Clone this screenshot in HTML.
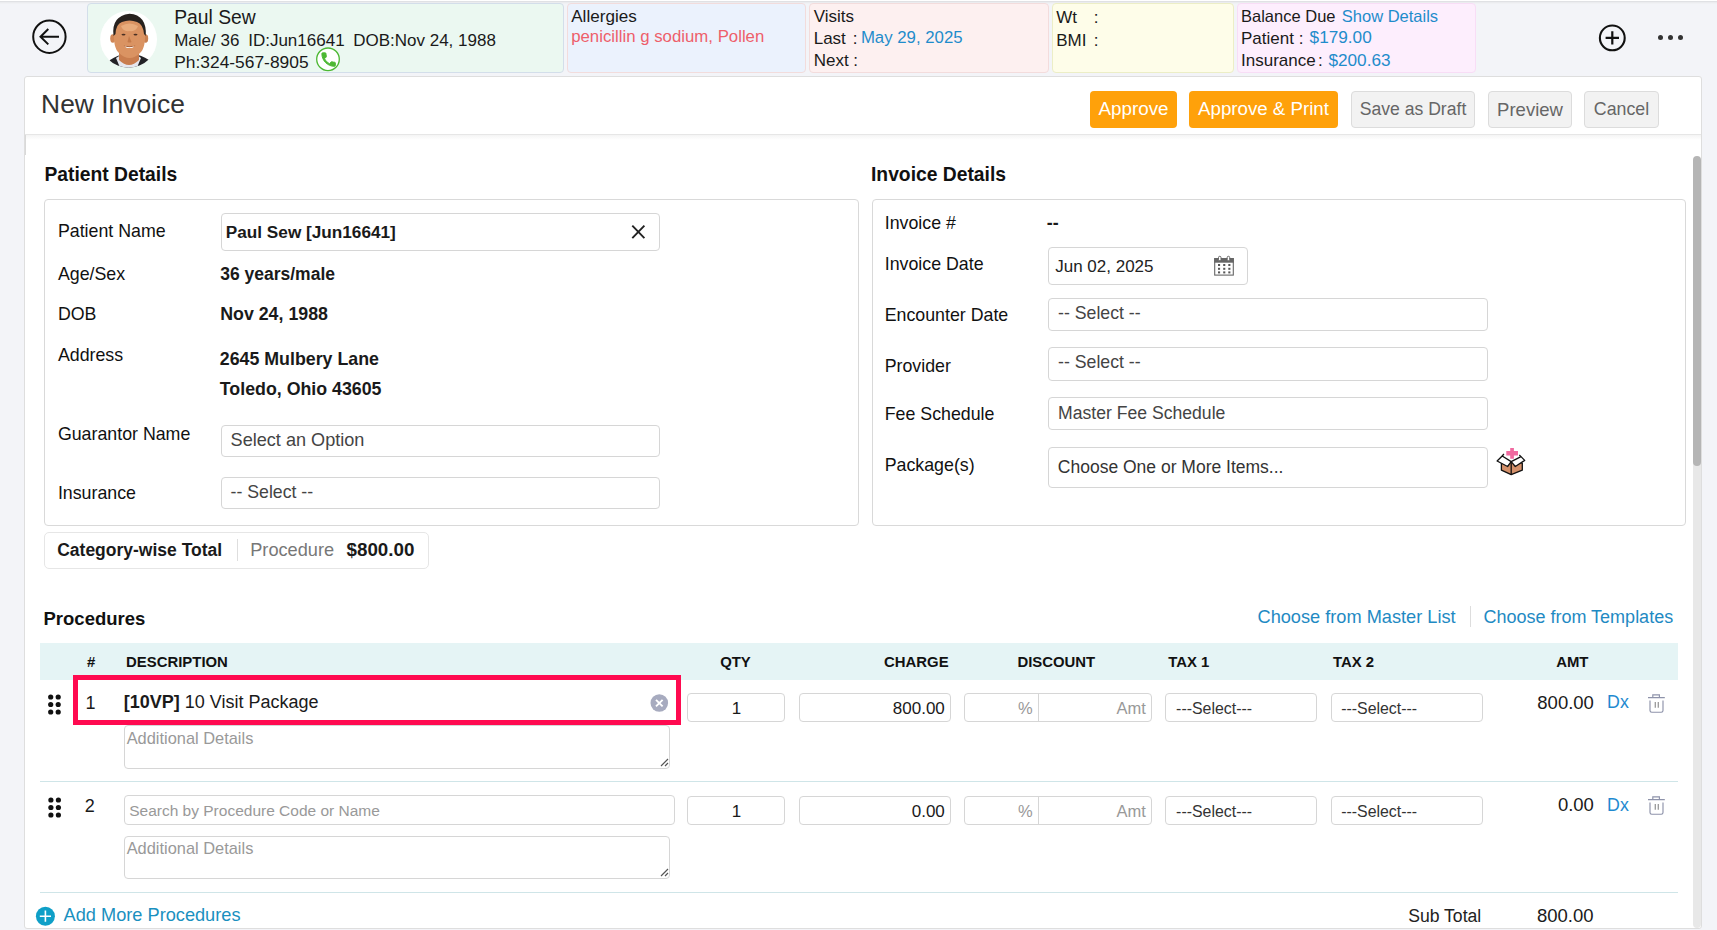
<!DOCTYPE html>
<html><head><meta charset="utf-8"><title>New Invoice</title>
<style>
html,body{margin:0;padding:0;width:1717px;height:930px;overflow:hidden;background:#f3f4f8;font-family:"Liberation Sans",sans-serif}
.t{position:absolute;line-height:1;white-space:nowrap}
.b{position:absolute}
</style></head><body>
<div class="b" style="left:0.0px;top:0.0px;width:1717.0px;height:1.0px;background:#fff"></div>
<div class="b" style="left:0.0px;top:1.0px;width:1717.0px;height:1.0px;background:#e0e1e4"></div>
<div class="b" style="left:0.0px;top:2.0px;width:1717.0px;height:1.0px;background:#ebecef"></div>
<div class="b" style="left:0.0px;top:3.0px;width:1717.0px;height:1.0px;background:#f0f1f4"></div>
<svg class="b" style="left:30px;top:18px" width="40" height="38" viewBox="30 18 40 38"><circle cx="49.4" cy="36.7" r="16.2" fill="none" stroke="#111" stroke-width="2"/><path d="M40.5 36.7H59M48.3 29L40.5 36.7L48.3 44.4" fill="none" stroke="#111" stroke-width="2"/></svg>
<div class="b" style="left:87.0px;top:3.0px;width:477.0px;height:70.0px;background:#ebf8f1;border:1px solid #d3deea;border-radius:4px;box-sizing:border-box"></div>
<div class="b" style="left:567.0px;top:3.0px;width:239.0px;height:70.0px;background:#ebf2fd;border:1px solid #f2dcdc;border-radius:4px;box-sizing:border-box"></div>
<div class="b" style="left:809.0px;top:3.0px;width:240.0px;height:70.0px;background:#fdf0f0;border:1px solid #f3dcdc;border-radius:4px;box-sizing:border-box"></div>
<div class="b" style="left:1052.0px;top:3.0px;width:182.0px;height:70.0px;background:#fefde9;border:1px solid #eceec6;border-radius:4px;box-sizing:border-box"></div>
<div class="b" style="left:1237.0px;top:3.0px;width:239.0px;height:70.0px;background:#fdeefd;border:1px solid #f8ddf6;border-radius:4px;box-sizing:border-box"></div>
<svg class="b" style="left:96px;top:6px" width="66" height="66" viewBox="96 6 66 66">
<circle cx="128.6" cy="39.3" r="28.4" fill="#fff"/>
<clipPath id="av"><circle cx="128.6" cy="39.3" r="28.4"/></clipPath>
<g clip-path="url(#av)">
<path d="M104 70 L110 60 Q118 55 124 54 L134 54 Q141 55 149 60 L154 70Z" fill="#222226"/>
<path d="M116 58 Q120 55 124 54 L134 54 Q138 55 141 58 L136 70 L121 70Z" fill="#e6e7ee"/>
<path d="M119 46 L119 60 Q129 70 139 60 L139 46Z" fill="#c97d4e"/>
<ellipse cx="112.8" cy="38.5" rx="2.6" ry="4.2" fill="#d08656"/>
<ellipse cx="145.6" cy="38.5" rx="2.6" ry="4.2" fill="#c98050"/>
<path d="M114 30 Q113 48 119 53 Q124 58 129.5 58 Q135 58 140 53 Q146 48 145 30 Q144 20 129.5 20 Q115 20 114 30Z" fill="#da9362"/>
<path d="M121 26 Q129.5 21 138 26 Q136 32 129.5 31 Q123 32 121 26Z" fill="#e9ac7c"/>
<path d="M113.5 36 Q111 16 129.5 13.8 Q147 15 145.8 36 L144 34 Q143 24 137 22 Q129.5 19 122 22 Q116 24 115.5 34Z" fill="#27211e"/>
<ellipse cx="123.5" cy="34.6" rx="2" ry="0.9" fill="#4a3024"/><ellipse cx="135.5" cy="34.6" rx="2" ry="0.9" fill="#4a3024"/>
<path d="M123.5 45.5 Q129.5 49.5 135.5 45.5 Q129.5 47.5 123.5 45.5Z" fill="#8a4a2a"/>
<path d="M125 46.2 Q129.5 48.4 134 46.2 L133 47.6 Q129.5 48.6 126 47.6Z" fill="#fff"/>
<path d="M129 36 L127.5 42 Q129.5 43 131.5 42Z" fill="#c47a4a"/>
</g></svg>
<div class="t" style="left:174.2px;top:7.8px;font-size:19.3px;font-weight:400;color:#1a1a1a;">Paul Sew</div>
<div class="t" style="left:174.2px;top:31.6px;font-size:17px;font-weight:400;color:#1a1a1a;">Male/ 36</div>
<div class="t" style="left:248.2px;top:31.6px;font-size:17px;font-weight:400;color:#1a1a1a;">ID:Jun16641</div>
<div class="t" style="left:353.2px;top:31.6px;font-size:17px;font-weight:400;color:#1a1a1a;">DOB:Nov 24, 1988</div>
<div class="t" style="left:174.2px;top:54.3px;font-size:17.4px;font-weight:400;color:#1a1a1a;">Ph:324-567-8905</div>
<svg class="b" style="left:312px;top:44px" width="32" height="30" viewBox="312 44 32 30"><circle cx="328" cy="59.3" r="11.3" fill="#fff" stroke="#4cb833" stroke-width="1.3"/><g transform="translate(319.6 50.6) scale(0.75)"><path d="M6.62 10.79c1.44 2.83 3.76 5.14 6.59 6.59l2.2-2.2c.27-.27.67-.36 1.02-.24 1.12.37 2.33.57 3.57.57.55 0 1 .45 1 1V20c0 .55-.45 1-1 1-9.39 0-17-7.610-17-17 0-.55.45-1 1-1h3.5c.55 0 1 .45 1 1 0 1.25.2 2.45.57 3.57.11.35.03.74-.25 1.02l-2.2 2.2z" fill="#4cb833" stroke="#4cb833" stroke-width="1.3" stroke-linejoin="round"/></g></svg>
<div class="t" style="left:571.2px;top:8.1px;font-size:17.1px;font-weight:400;color:#1a1a1a;">Allergies</div>
<div class="t" style="left:571.2px;top:28.6px;font-size:16.8px;font-weight:400;color:#ee5f6b;">penicillin g sodium, Pollen</div>
<div class="t" style="left:813.7px;top:8.1px;font-size:17px;font-weight:400;color:#1a1a1a;">Visits</div>
<div class="t" style="left:813.7px;top:30.1px;font-size:17px;font-weight:400;color:#1a1a1a;">Last</div>
<div class="t" style="left:852.7px;top:30.1px;font-size:17px;font-weight:400;color:#1a1a1a;">:</div>
<div class="t" style="left:860.9px;top:30.3px;font-size:16.8px;font-weight:400;color:#1f8ccb;">May 29, 2025</div>
<div class="t" style="left:813.7px;top:52.0px;font-size:17px;font-weight:400;color:#1a1a1a;">Next :</div>
<div class="t" style="left:1056.2px;top:9.0px;font-size:17px;font-weight:400;color:#1a1a1a;">Wt</div>
<div class="t" style="left:1093.7px;top:9.0px;font-size:17px;font-weight:400;color:#1a1a1a;">:</div>
<div class="t" style="left:1056.2px;top:31.8px;font-size:17px;font-weight:400;color:#1a1a1a;">BMI</div>
<div class="t" style="left:1093.7px;top:31.8px;font-size:17px;font-weight:400;color:#1a1a1a;">:</div>
<div class="t" style="left:1241.0px;top:8.1px;font-size:16.5px;font-weight:400;color:#1a1a1a;">Balance Due</div>
<div class="t" style="left:1341.8px;top:8.1px;font-size:16.5px;font-weight:400;color:#1f8ccb;">Show Details</div>
<div class="t" style="left:1241.0px;top:29.6px;font-size:17px;font-weight:400;color:#1a1a1a;">Patient</div>
<div class="t" style="left:1298.7px;top:29.6px;font-size:17px;font-weight:400;color:#1a1a1a;">:</div>
<div class="t" style="left:1309.6px;top:29.4px;font-size:17.2px;font-weight:400;color:#1f8ccb;">$179.00</div>
<div class="t" style="left:1241.0px;top:52.0px;font-size:17px;font-weight:400;color:#1a1a1a;">Insurance</div>
<div class="t" style="left:1318.0px;top:52.0px;font-size:17px;font-weight:400;color:#1a1a1a;">:</div>
<div class="t" style="left:1328.4px;top:51.8px;font-size:17.2px;font-weight:400;color:#1f8ccb;">$200.63</div>
<svg class="b" style="left:1596px;top:22px" width="32" height="32" viewBox="1596 22 32 32"><circle cx="1612.3" cy="37.9" r="12.4" fill="none" stroke="#111" stroke-width="2.1"/><path d="M1605.6 37.9H1619M1612.3 31.2V44.6" stroke="#111" stroke-width="2.2"/></svg>
<div class="b" style="left:1657.6px;top:35.3px;width:5.2px;height:5.2px;background:#333;border-radius:50%"></div>
<div class="b" style="left:1667.6px;top:35.3px;width:5.2px;height:5.2px;background:#333;border-radius:50%"></div>
<div class="b" style="left:1677.7px;top:35.3px;width:5.2px;height:5.2px;background:#333;border-radius:50%"></div>
<div class="b" style="left:24.0px;top:76.0px;width:1678.0px;height:853.0px;background:#fff;border:1px solid #dedede;border-radius:3px;box-sizing:border-box"></div>
<div class="b" style="left:25.0px;top:134.0px;width:1676.0px;height:1.0px;background:#e6e6e6"></div>
<div class="b" style="left:25.0px;top:135.0px;width:1676.0px;height:5.0px;background:linear-gradient(#f4f4f4,#fff)"></div>
<div class="b" style="left:25.0px;top:135.0px;width:1.0px;height:20.0px;background:#d9d9d9"></div>
<div class="t" style="left:41.1px;top:91.3px;font-size:26.4px;font-weight:400;color:#333;">New Invoice</div>
<div class="b" style="left:1090.0px;top:91.0px;width:87.0px;height:37.0px;background:#ffa10a;border-radius:4px"></div>
<div class="t" style="left:933.5px;width:400px;text-align:center;top:100.3px;font-size:18.8px;font-weight:400;color:#fff;">Approve</div>
<div class="b" style="left:1189.0px;top:91.0px;width:149.0px;height:37.0px;background:#ffa10a;border-radius:4px"></div>
<div class="t" style="left:1063.5px;width:400px;text-align:center;top:100.4px;font-size:18.7px;font-weight:400;color:#fff;">Approve &amp; Print</div>
<div class="b" style="left:1351.0px;top:91.0px;width:124.0px;height:37.0px;background:#f2f2f2;border:1px solid #dcdcdc;border-radius:4px;box-sizing:border-box"></div>
<div class="t" style="left:1213.0px;width:400px;text-align:center;top:101.3px;font-size:17.6px;font-weight:400;color:#666;">Save as Draft</div>
<div class="b" style="left:1488.0px;top:91.0px;width:84.0px;height:37.0px;background:#f2f2f2;border:1px solid #dcdcdc;border-radius:4px;box-sizing:border-box"></div>
<div class="t" style="left:1330.0px;width:400px;text-align:center;top:100.5px;font-size:18.5px;font-weight:400;color:#666;">Preview</div>
<div class="b" style="left:1584.0px;top:91.0px;width:75.0px;height:37.0px;background:#f2f2f2;border:1px solid #dcdcdc;border-radius:4px;box-sizing:border-box"></div>
<div class="t" style="left:1421.5px;width:400px;text-align:center;top:101.1px;font-size:17.8px;font-weight:400;color:#666;">Cancel</div>
<div class="b" style="left:1693.0px;top:300.0px;width:8.0px;height:628.0px;background:#e8e8e8;border-radius:0 0 4px 4px"></div>
<div class="b" style="left:1693.0px;top:156.0px;width:8.0px;height:310.0px;background:#b5b5b5;border-radius:4px"></div>
<div class="t" style="left:44.4px;top:165.1px;font-size:19.3px;font-weight:700;color:#111;">Patient Details</div>
<div class="b" style="left:44.0px;top:199.0px;width:815.0px;height:327.0px;border:1px solid #d9d9d9;border-radius:4px;box-sizing:border-box"></div>
<div class="t" style="left:57.9px;top:222.5px;font-size:17.8px;font-weight:400;color:#111;">Patient Name</div>
<div class="b" style="left:220.5px;top:212.5px;width:439.5px;height:38.5px;border:1px solid #d6d6d6;border-radius:4px;box-sizing:border-box;background:#fff;"></div>
<div class="t" style="left:225.8px;top:223.7px;font-size:17.2px;font-weight:700;color:#1a1a1a;">Paul Sew [Jun16641]</div>
<svg class="b" style="left:624px;top:216px" width="30" height="30" viewBox="624 216 30 30"><path d="M632.3 225.6L644.4 238.1M644.4 225.6L632.3 238.1" stroke="#222" stroke-width="1.9"/></svg>
<div class="t" style="left:57.9px;top:266.0px;font-size:17.8px;font-weight:400;color:#111;">Age/Sex</div>
<div class="t" style="left:220.2px;top:266.2px;font-size:17.5px;font-weight:700;color:#1a1a1a;">36 years/male</div>
<div class="t" style="left:57.9px;top:306.2px;font-size:17.8px;font-weight:400;color:#111;">DOB</div>
<div class="t" style="left:220.2px;top:305.7px;font-size:17.8px;font-weight:700;color:#1a1a1a;">Nov 24, 1988</div>
<div class="t" style="left:57.9px;top:347.2px;font-size:17.8px;font-weight:400;color:#111;">Address</div>
<div class="t" style="left:219.8px;top:351.3px;font-size:17.8px;font-weight:700;color:#1a1a1a;">2645 Mulbery Lane</div>
<div class="t" style="left:219.8px;top:380.8px;font-size:17.8px;font-weight:700;color:#1a1a1a;">Toledo, Ohio 43605</div>
<div class="t" style="left:57.9px;top:426.3px;font-size:17.8px;font-weight:400;color:#111;">Guarantor Name</div>
<div class="b" style="left:220.6px;top:424.6px;width:439.4px;height:32.4px;border:1px solid #d6d6d6;border-radius:4px;box-sizing:border-box;background:#fff;"></div>
<div class="t" style="left:230.6px;top:430.9px;font-size:18.1px;font-weight:400;color:#444;">Select an Option</div>
<div class="t" style="left:57.9px;top:485.4px;font-size:17.8px;font-weight:400;color:#111;">Insurance</div>
<div class="b" style="left:220.6px;top:476.5px;width:439.4px;height:32.5px;border:1px solid #d6d6d6;border-radius:4px;box-sizing:border-box;background:#fff;"></div>
<div class="t" style="left:230.6px;top:483.6px;font-size:17.7px;font-weight:400;color:#444;">-- Select --</div>
<div class="b" style="left:44.0px;top:532.0px;width:385.0px;height:37.0px;border:1px solid #e6e6e6;border-radius:5px;box-sizing:border-box"></div>
<div class="t" style="left:57.2px;top:541.6px;font-size:17.5px;font-weight:700;color:#1a1a1a;">Category-wise Total</div>
<div class="b" style="left:237.0px;top:539.0px;width:1.0px;height:22.0px;background:#dedede"></div>
<div class="t" style="left:250.2px;top:541.0px;font-size:18.2px;font-weight:400;color:#777;">Procedure</div>
<div class="t" style="left:346.5px;top:540.5px;font-size:18.8px;font-weight:700;color:#1a1a1a;">$800.00</div>
<div class="t" style="left:871.0px;top:165.1px;font-size:19.3px;font-weight:700;color:#111;">Invoice Details</div>
<div class="b" style="left:872.0px;top:199.0px;width:814.0px;height:327.0px;border:1px solid #d9d9d9;border-radius:4px;box-sizing:border-box"></div>
<div class="t" style="left:884.7px;top:214.5px;font-size:17.8px;font-weight:400;color:#111;">Invoice #</div>
<div class="t" style="left:1046.8px;top:214.5px;font-size:17.8px;font-weight:700;color:#1a1a1a;">--</div>
<div class="t" style="left:884.7px;top:256.1px;font-size:17.8px;font-weight:400;color:#111;">Invoice Date</div>
<div class="b" style="left:1048.0px;top:247.0px;width:200.0px;height:38.0px;border:1px solid #d6d6d6;border-radius:4px;box-sizing:border-box;background:#fff;"></div>
<div class="t" style="left:1055.2px;top:257.7px;font-size:17px;font-weight:400;color:#222;">Jun 02, 2025</div>
<svg class="b" style="left:1208px;top:250px" width="32" height="32" viewBox="1208 250 32 32">
<rect x="1214.7" y="258.6" width="18.6" height="16.5" fill="#fff" stroke="#666" stroke-width="1.1"/>
<rect x="1214.2" y="258.1" width="19.6" height="4.6" fill="#666"/>
<rect x="1218.5" y="256.3" width="2.5" height="4.4" rx="1.2" fill="#fff" stroke="#666" stroke-width="1"/>
<rect x="1227.2" y="256.3" width="2.5" height="4.4" rx="1.2" fill="#fff" stroke="#666" stroke-width="1"/>
<g fill="#555">
<rect x="1218" y="264" width="2.1" height="2"/><rect x="1223.2" y="264" width="2.1" height="2"/><rect x="1228.3" y="264" width="2.1" height="2"/>
<rect x="1218" y="267.8" width="2.1" height="2"/><rect x="1223.2" y="267.8" width="2.1" height="2"/><rect x="1228.3" y="267.8" width="2.1" height="2"/>
<rect x="1218" y="271.4" width="2.1" height="2"/><rect x="1223.2" y="271.4" width="2.1" height="2"/><rect x="1228.3" y="271.4" width="2.1" height="2"/>
</g></svg>
<div class="t" style="left:884.7px;top:307.2px;font-size:17.8px;font-weight:400;color:#111;">Encounter Date</div>
<div class="b" style="left:1048.0px;top:298.0px;width:440.0px;height:33.0px;border:1px solid #d6d6d6;border-radius:4px;box-sizing:border-box;background:#fff;"></div>
<div class="t" style="left:1058.1px;top:305.2px;font-size:17.7px;font-weight:400;color:#444;">-- Select --</div>
<div class="t" style="left:884.7px;top:357.5px;font-size:17.8px;font-weight:400;color:#111;">Provider</div>
<div class="b" style="left:1048.0px;top:347.0px;width:440.0px;height:34.0px;border:1px solid #d6d6d6;border-radius:4px;box-sizing:border-box;background:#fff;"></div>
<div class="t" style="left:1058.1px;top:354.4px;font-size:17.7px;font-weight:400;color:#444;">-- Select --</div>
<div class="t" style="left:884.7px;top:406.1px;font-size:17.8px;font-weight:400;color:#111;">Fee Schedule</div>
<div class="b" style="left:1048.0px;top:397.0px;width:440.0px;height:33.0px;border:1px solid #d6d6d6;border-radius:4px;box-sizing:border-box;background:#fff;"></div>
<div class="t" style="left:1058.1px;top:404.7px;font-size:17.6px;font-weight:400;color:#444;">Master Fee Schedule</div>
<div class="t" style="left:884.7px;top:456.8px;font-size:17.8px;font-weight:400;color:#111;">Package(s)</div>
<div class="b" style="left:1048.0px;top:446.5px;width:440.0px;height:41.5px;border:1px solid #d6d6d6;border-radius:4px;box-sizing:border-box;background:#fff;"></div>
<div class="t" style="left:1057.8px;top:459.0px;font-size:17.5px;font-weight:400;color:#333;">Choose One or More Items...</div>
<svg class="b" style="left:1490px;top:442px" width="42" height="38" viewBox="1490 442 42 38">
<path d="M1501.4 463.2 L1511.2 461.6 L1522.3 463.2 L1522.3 470.2 L1511.2 474.7 L1501.4 470.2Z" fill="#d4906a" stroke="#111" stroke-width="1.3" stroke-linejoin="round"/>
<path d="M1511.2 461.6 V474.7" stroke="#111" stroke-width="1.3"/>
<path d="M1497.1 461 L1502.2 456 L1511.2 461.6 L1507.6 466.5Z" fill="#fff" stroke="#111" stroke-width="1.3" stroke-linejoin="round"/>
<path d="M1511.2 461.6 L1521 456.6 L1524.7 460.4 L1515.3 466.5Z" fill="#fff" stroke="#111" stroke-width="1.3" stroke-linejoin="round"/>
<path d="M1502.2 456 L1503.9 454 M1521 456.6 L1519.3 455" stroke="#111" stroke-width="1.3"/>
<path d="M1510.2 447.9h3.7v3.1h4.1v4.5h-4.1v3.2h-3.7v-3.2h-3.9v-4.5h3.9z" fill="#f06aa0"/>
</svg>
<div class="t" style="left:43.5px;top:609.7px;font-size:18.5px;font-weight:700;color:#111;">Procedures</div>
<div class="t" style="left:1257.5px;top:607.7px;font-size:18.2px;font-weight:400;color:#1f8ac3;">Choose from Master List</div>
<div class="b" style="left:1470.0px;top:606.0px;width:1.0px;height:21.0px;background:#dddddd"></div>
<div class="t" style="left:1483.4px;top:607.9px;font-size:18px;font-weight:400;color:#1f8ac3;">Choose from Templates</div>
<div class="b" style="left:40.0px;top:643.0px;width:1638.0px;height:37.0px;background:#e5f4f5"></div>
<div class="t" style="left:86.9px;top:654.7px;font-size:14.9px;font-weight:700;color:#111;">#</div>
<div class="t" style="left:126.1px;top:654.7px;font-size:14.9px;font-weight:700;color:#111;">DESCRIPTION</div>
<div class="t" style="left:720.2px;top:654.7px;font-size:14.9px;font-weight:700;color:#111;">QTY</div>
<div class="t" style="left:884.1px;top:654.7px;font-size:14.9px;font-weight:700;color:#111;">CHARGE</div>
<div class="t" style="left:1017.4px;top:654.7px;font-size:14.9px;font-weight:700;color:#111;">DISCOUNT</div>
<div class="t" style="left:1168.3px;top:654.7px;font-size:14.9px;font-weight:700;color:#111;">TAX 1</div>
<div class="t" style="left:1332.9px;top:654.7px;font-size:14.9px;font-weight:700;color:#111;">TAX 2</div>
<div class="t" style="left:1556.2px;top:654.7px;font-size:14.9px;font-weight:700;color:#111;">AMT</div>
<svg class="b" style="left:40px;top:689px" width="30" height="30" viewBox="40 689 30 30" fill="#111"><circle cx="50.70" cy="697.00" r="2.6"/><circle cx="58.20" cy="697.00" r="2.6"/><circle cx="50.70" cy="704.50" r="2.6"/><circle cx="58.20" cy="704.50" r="2.6"/><circle cx="50.70" cy="712.00" r="2.6"/><circle cx="58.20" cy="712.00" r="2.6"/></svg>
<div class="t" style="left:85.4px;top:693.6px;font-size:18px;font-weight:400;color:#1a1a1a;">1</div>
<div class="b" style="left:73.0px;top:675.4px;width:608.0px;height:49.6px;border:5px solid #ff0a50;box-sizing:border-box"></div>
<div class="t" style="left:123.7px;top:693.0px;font-size:18px;color:#1a1a1a"><b>[10VP]</b> 10 Visit Package</div>
<svg class="b" style="left:644px;top:688px" width="30" height="30" viewBox="644 688 30 30"><circle cx="659.3" cy="703" r="8.8" fill="#a7abbf"/><path d="M656 699.8L662.6 706.4M662.6 699.8L656 706.4" stroke="#fff" stroke-width="1.9"/></svg>
<div class="b" style="left:123.7px;top:725.0px;width:546.8px;height:44.0px;border:1px solid #d6d6d6;border-radius:4px;box-sizing:border-box;background:#fff;"></div>
<svg class="b" style="left:659.5px;top:758px" width="9" height="9" viewBox="0 0 9 9"><path d="M8 1L1 8M8 5L5 8" stroke="#555" stroke-width="1.2"/></svg>
<div class="t" style="left:126.7px;top:730.1px;font-size:16.4px;font-weight:400;color:#999;">Additional Details</div>
<div class="b" style="left:687.4px;top:692.5px;width:98.1px;height:29.5px;border:1px solid #d6d6d6;border-radius:4px;box-sizing:border-box;background:#fff;"></div>
<div class="t" style="left:536.5px;width:400px;text-align:center;top:699.9px;font-size:17px;font-weight:400;color:#1a1a1a;">1</div>
<div class="b" style="left:798.5px;top:692.5px;width:152.1px;height:29.5px;border:1px solid #d6d6d6;border-radius:4px;box-sizing:border-box;background:#fff;"></div>
<div class="t" style="right:772.2px;top:699.9px;font-size:17px;font-weight:400;color:#1a1a1a;">800.00</div>
<div class="b" style="left:964.4px;top:692.5px;width:188.1px;height:29.5px;border:1px solid #d6d6d6;border-radius:4px;box-sizing:border-box;background:#fff;"></div>
<div class="b" style="left:1038.0px;top:693.0px;width:1.0px;height:28.0px;background:#d6d6d6"></div>
<div class="t" style="right:684.4px;top:700.3px;font-size:16.5px;font-weight:400;color:#999;">%</div>
<div class="t" style="right:571.1px;top:700.3px;font-size:16.5px;font-weight:400;color:#999;">Amt</div>
<div class="b" style="left:1165.4px;top:692.5px;width:152.0px;height:29.5px;border:1px solid #d6d6d6;border-radius:4px;box-sizing:border-box;background:#fff;"></div>
<div class="t" style="left:1176.1px;top:700.8px;font-size:15.9px;font-weight:400;color:#333;">---Select---</div>
<div class="b" style="left:1331.3px;top:692.5px;width:151.3px;height:29.5px;border:1px solid #d6d6d6;border-radius:4px;box-sizing:border-box;background:#fff;"></div>
<div class="t" style="left:1341.2px;top:700.8px;font-size:15.9px;font-weight:400;color:#333;">---Select---</div>
<div class="t" style="right:123.1px;top:693.6px;font-size:18.5px;font-weight:400;color:#1a1a1a;">800.00</div>
<div class="t" style="left:1607.1px;top:694.2px;font-size:17.8px;font-weight:400;color:#1f8ad0;">Dx</div>
<svg class="b" style="left:1640px;top:688.0px" width="32" height="30" viewBox="1640 688 32 30">
<path d="M1648 697.6H1664.8M1652.8 697.6V694.8H1659.4V697.6M1650 700.5V710.5Q1650 712.2 1651.7 712.2H1661.3Q1663 712.2 1663 710.5V700.5" fill="none" stroke="#8e93aa" stroke-width="1.15"/>
<path d="M1655.3 702V707.8M1658.3 702V707.8" stroke="#9a9a9a" stroke-width="1.3"/>
</svg>
<div class="b" style="left:40.0px;top:781.0px;width:1638.0px;height:1.0px;background:#cfe5e8"></div>
<svg class="b" style="left:40px;top:792px" width="30" height="30" viewBox="40 792 30 30" fill="#111"><circle cx="50.90" cy="800.00" r="2.6"/><circle cx="58.40" cy="800.00" r="2.6"/><circle cx="50.90" cy="807.50" r="2.6"/><circle cx="58.40" cy="807.50" r="2.6"/><circle cx="50.90" cy="815.00" r="2.6"/><circle cx="58.40" cy="815.00" r="2.6"/></svg>
<div class="t" style="left:84.8px;top:797.4px;font-size:18px;font-weight:400;color:#1a1a1a;">2</div>
<div class="b" style="left:123.5px;top:795.4px;width:551.2px;height:29.6px;border:1px solid #d6d6d6;border-radius:4px;box-sizing:border-box;background:#fff;"></div>
<div class="t" style="left:129.2px;top:803.3px;font-size:15.5px;font-weight:400;color:#999;">Search by Procedure Code or Name</div>
<div class="b" style="left:123.7px;top:835.6px;width:546.8px;height:43.4px;border:1px solid #d6d6d6;border-radius:4px;box-sizing:border-box;background:#fff;"></div>
<svg class="b" style="left:659.5px;top:868px" width="9" height="9" viewBox="0 0 9 9"><path d="M8 1L1 8M8 5L5 8" stroke="#555" stroke-width="1.2"/></svg>
<div class="t" style="left:126.7px;top:840.1px;font-size:16.4px;font-weight:400;color:#999;">Additional Details</div>
<div class="b" style="left:687.4px;top:795.5px;width:98.1px;height:29.5px;border:1px solid #d6d6d6;border-radius:4px;box-sizing:border-box;background:#fff;"></div>
<div class="t" style="left:536.5px;width:400px;text-align:center;top:802.9px;font-size:17px;font-weight:400;color:#1a1a1a;">1</div>
<div class="b" style="left:798.5px;top:795.5px;width:152.1px;height:29.5px;border:1px solid #d6d6d6;border-radius:4px;box-sizing:border-box;background:#fff;"></div>
<div class="t" style="right:772.2px;top:802.9px;font-size:17px;font-weight:400;color:#1a1a1a;">0.00</div>
<div class="b" style="left:964.4px;top:795.5px;width:188.1px;height:29.5px;border:1px solid #d6d6d6;border-radius:4px;box-sizing:border-box;background:#fff;"></div>
<div class="b" style="left:1038.0px;top:796.5px;width:1.0px;height:27.5px;background:#d6d6d6"></div>
<div class="t" style="right:684.4px;top:803.3px;font-size:16.5px;font-weight:400;color:#999;">%</div>
<div class="t" style="right:571.1px;top:803.3px;font-size:16.5px;font-weight:400;color:#999;">Amt</div>
<div class="b" style="left:1165.4px;top:795.5px;width:152.0px;height:29.5px;border:1px solid #d6d6d6;border-radius:4px;box-sizing:border-box;background:#fff;"></div>
<div class="t" style="left:1176.1px;top:803.8px;font-size:15.9px;font-weight:400;color:#333;">---Select---</div>
<div class="b" style="left:1331.3px;top:795.5px;width:151.3px;height:29.5px;border:1px solid #d6d6d6;border-radius:4px;box-sizing:border-box;background:#fff;"></div>
<div class="t" style="left:1341.2px;top:803.8px;font-size:15.9px;font-weight:400;color:#333;">---Select---</div>
<div class="t" style="right:123.1px;top:796.4px;font-size:18.5px;font-weight:400;color:#1a1a1a;">0.00</div>
<div class="t" style="left:1607.1px;top:797.0px;font-size:17.8px;font-weight:400;color:#1f8ad0;">Dx</div>
<svg class="b" style="left:1640px;top:789.6px" width="32" height="30" viewBox="1640 688 32 30">
<path d="M1648 697.6H1664.8M1652.8 697.6V694.8H1659.4V697.6M1650 700.5V710.5Q1650 712.2 1651.7 712.2H1661.3Q1663 712.2 1663 710.5V700.5" fill="none" stroke="#8e93aa" stroke-width="1.15"/>
<path d="M1655.3 702V707.8M1658.3 702V707.8" stroke="#9a9a9a" stroke-width="1.3"/>
</svg>
<div class="b" style="left:40.0px;top:892.0px;width:1638.0px;height:1.0px;background:#cfe5e8"></div>
<svg class="b" style="left:35px;top:906px" width="21" height="21" viewBox="0 0 21 21"><circle cx="10.4" cy="10.3" r="9.5" fill="#0f9fc7"/><path d="M10.4 4.6V15.8M4.8 10.3H16" stroke="#fff" stroke-width="1.6"/></svg>
<div class="t" style="left:63.6px;top:906.4px;font-size:18.2px;font-weight:400;color:#1a90bf;">Add More Procedures</div>
<div class="t" style="left:1408.2px;top:907.5px;font-size:17.6px;font-weight:400;color:#222;">Sub Total</div>
<div class="t" style="right:123.5px;top:906.7px;font-size:18.5px;font-weight:400;color:#1a1a1a;">800.00</div>
</body></html>
